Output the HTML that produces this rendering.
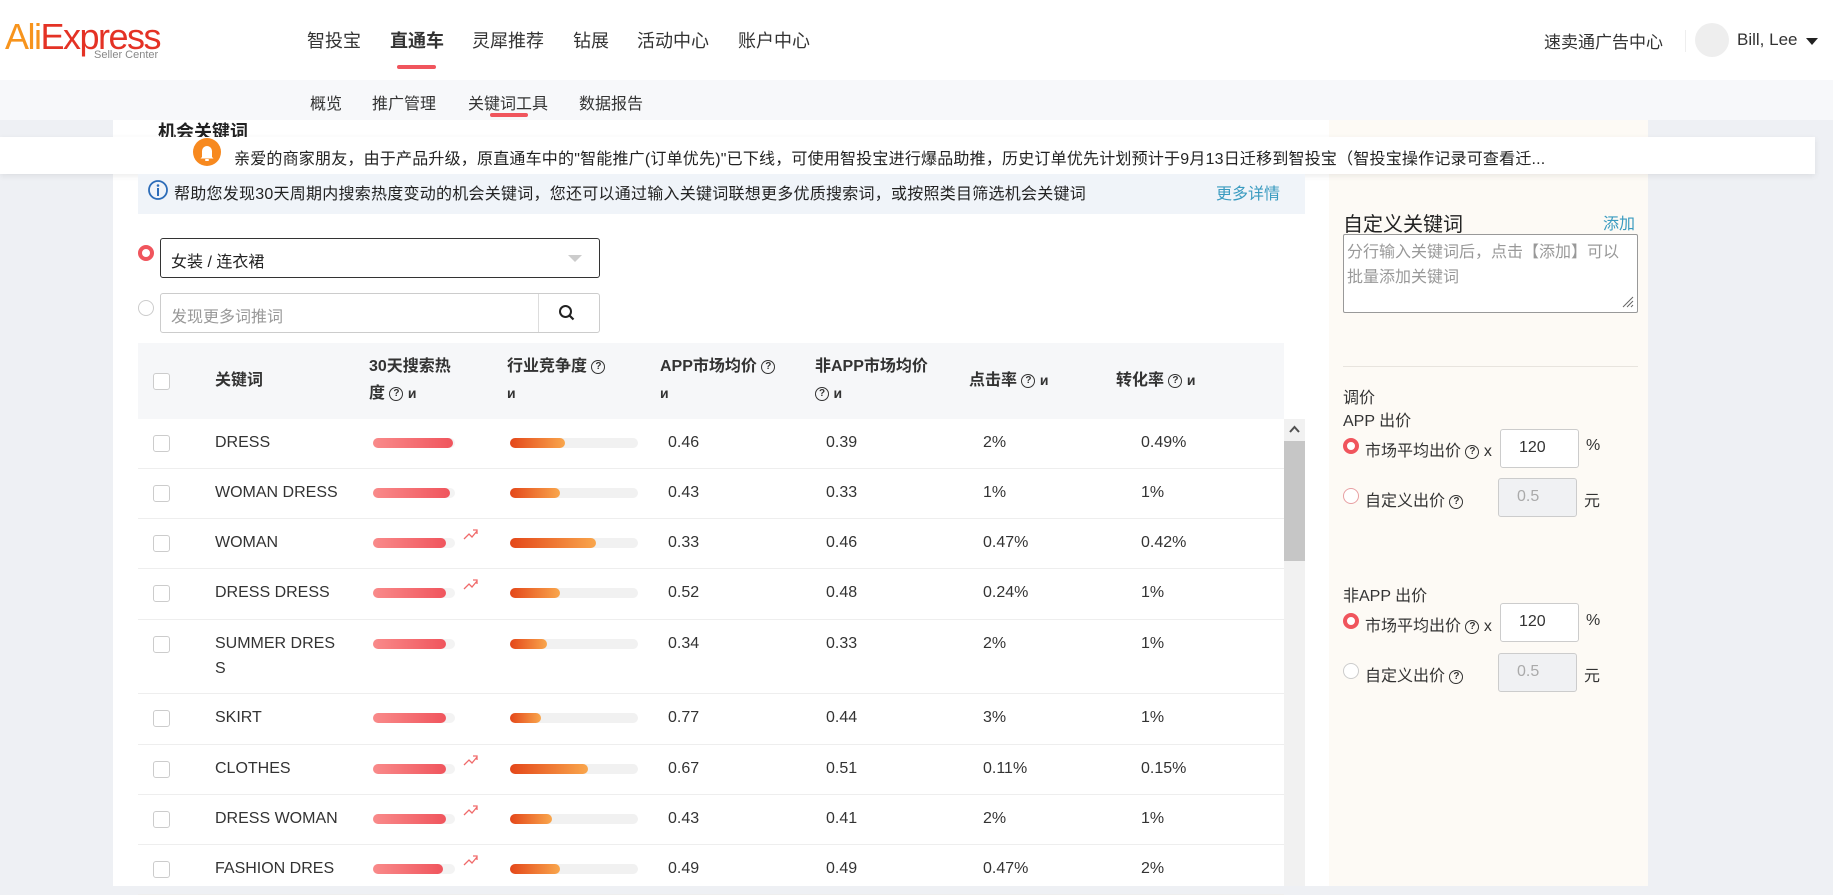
<!DOCTYPE html>
<html><head><meta charset="utf-8">
<style>
*{box-sizing:border-box;margin:0;padding:0}
body{width:1833px;height:886px;overflow:hidden;position:relative;background:#eef0f4;font-family:"Liberation Sans","Noto Sans CJK SC",sans-serif;color:#333}
.a{position:absolute;white-space:nowrap}
.hdr{left:0;top:0;width:1833px;height:80px;background:#fff}
.sub{left:0;top:80px;width:1833px;height:40px;background:#f7f8fa}
.nav{top:27px;font-size:18px;color:#333}
.sn{top:90px;font-size:16px;color:#333}
.main{left:113px;top:120px;width:1216px;height:766px;background:#fff}
.rp{left:1329px;top:120px;width:319px;height:766px;background:#fdfaf5}
.notice{left:0;top:137px;width:1815px;height:37px;background:#fff;box-shadow:0 2px 6px rgba(0,0,0,.08)}
.cb{width:17px;height:17px;border:1px solid #ccc;border-radius:3px;background:#fff}
.th{font-size:16px;font-weight:bold;color:#333;line-height:27px}
.row{left:138px;width:1146px;border-bottom:1px solid #eee}
.c{position:absolute;top:14px;font-size:16px;line-height:20px;color:#333;white-space:nowrap}
.hb{position:absolute;top:19px;left:235px;width:82px;height:10px;border-radius:5px;background:#f3f3f3}
.hb i{display:block;height:10px;border-radius:5px;background:linear-gradient(90deg,#f98a8a,#f0555d)}
.cbb{position:absolute;top:19px;left:372px;width:128px;height:10px;border-radius:5px;background:#f1f1f1}
.cbb i{display:block;height:10px;border-radius:5px;background:linear-gradient(90deg,#e4471a,#f9a64c)}
.tr{position:absolute;top:8px;left:325px}
.q{display:inline-block;width:14px;height:14px;border:1.5px solid #333;border-radius:50%;font-size:10px;line-height:11px;text-align:center;font-weight:bold;vertical-align:middle;color:#333}
.radon{width:16px;height:16px;border-radius:50%;border:4px solid #f0555d;background:#fff}
.radoff{width:16px;height:16px;border-radius:50%;border:1px solid #e8a0a3;background:#fff}
.inp{border:1px solid #ccc;border-radius:3px;background:#fff;font-size:16px;padding-left:18px;line-height:36px}
.rl{font-size:16px;color:#333}
</style></head><body>
<div class="a hdr"></div>
<div class="a sub"></div>
<div class="a main"></div>
<div class="a rp"></div>

<!-- logo -->
<div class="a" style="left:5px;top:19px;font-size:36px;letter-spacing:-1.5px;line-height:36px"><span style="color:#f7941d">Ali</span><span style="color:#e43225">Express</span></div>
<div class="a" style="left:94px;top:49px;font-size:11px;color:#888">Seller Center</div>

<div class="a nav" style="left:307px">智投宝</div>
<div class="a nav" style="left:390px;font-weight:bold">直通车</div>
<div class="a" style="left:397px;top:65px;width:39px;height:4px;border-radius:2px;background:#f0555d"></div>
<div class="a nav" style="left:472px">灵犀推荐</div>
<div class="a nav" style="left:573px">钻展</div>
<div class="a nav" style="left:637px">活动中心</div>
<div class="a nav" style="left:738px">账户中心</div>

<div class="a nav" style="left:1544px;top:28px;font-size:17px">速卖通广告中心</div>
<div class="a" style="left:1685px;top:30px;width:1px;height:22px;background:#eee"></div>
<div class="a" style="left:1695px;top:23px;width:34px;height:34px;border-radius:50%;background:#eee"></div>
<div class="a nav" style="left:1737px;top:30px;font-size:17px">Bill, Lee</div>
<div class="a" style="left:1806px;top:38px;width:0;height:0;border-left:6px solid transparent;border-right:6px solid transparent;border-top:7px solid #222"></div>

<div class="a sn" style="left:310px">概览</div>
<div class="a sn" style="left:372px">推广管理</div>
<div class="a sn" style="left:468px">关键词工具</div>
<div class="a" style="left:490px;top:113px;width:38px;height:4px;border-radius:2px;background:#f0555d"></div>
<div class="a sn" style="left:579px">数据报告</div>

<div class="a" style="left:158px;top:118px;font-size:18px;font-weight:bold;color:#222">机会关键词</div>

<div class="a notice"></div>
<div class="a" style="left:193px;top:138px;width:28px;height:28px;border-radius:50%;background:#f7891f">
<svg width="28" height="28" viewBox="0 0 28 28"><path d="M9 19V13a5 5 0 0 1 10 0v6l1.5 1.5h-13z" fill="#fff"/><rect x="12" y="21" width="4" height="2" rx="1" fill="#fff"/></svg></div>
<div class="a" style="left:234px;top:145px;font-size:16px;color:#222;letter-spacing:0.2px">亲爱的商家朋友，由于产品升级，原直通车中的"智能推广(订单优先)"已下线，可使用智投宝进行爆品助推，历史订单优先计划预计于9月13日迁移到智投宝（智投宝操作记录可查看迁...</div>

<div class="a" style="left:138px;top:174px;width:1167px;height:40px;background:#f0f4f9"></div>
<svg class="a" style="left:147px;top:179px" width="22" height="22" viewBox="0 0 22 22"><circle cx="11" cy="11" r="9" fill="none" stroke="#2c6cb8" stroke-width="1.8"/><circle cx="11" cy="6.5" r="1.3" fill="#2c6cb8"/><rect x="10" y="9" width="2" height="8" fill="#2c6cb8"/></svg>
<div class="a" style="left:174px;top:180px;font-size:16px;color:#222;letter-spacing:0.25px">帮助您发现30天周期内搜索热度变动的机会关键词，您还可以通过输入关键词联想更多优质搜索词，或按照类目筛选机会关键词</div>
<div class="a" style="left:1216px;top:180px;font-size:16px;color:#3a9bc0">更多详情</div>

<div class="a radon" style="left:138px;top:245px"></div>
<div class="a" style="left:160px;top:238px;width:440px;height:40px;border:1px solid #333;border-radius:3px"></div>
<div class="a" style="left:171px;top:248px;font-size:16px;color:#222">女装 / 连衣裙</div>
<div class="a" style="left:568px;top:255px;width:0;height:0;border-left:7px solid transparent;border-right:7px solid transparent;border-top:7px solid #ccc"></div>

<div class="a radoff" style="left:138px;top:300px;border-color:#ccc"></div>
<div class="a" style="left:160px;top:293px;width:440px;height:40px;border:1px solid #ccc;border-radius:3px"></div>
<div class="a" style="left:538px;top:294px;width:1px;height:38px;background:#ddd"></div>
<div class="a" style="left:171px;top:303px;font-size:16px;color:#999">发现更多词推词</div>
<svg class="a" style="left:558px;top:304px" width="18" height="18" viewBox="0 0 18 18"><circle cx="7.5" cy="7.5" r="5.5" fill="none" stroke="#222" stroke-width="2"/><path d="M11.5 11.5l4 4" stroke="#222" stroke-width="2.2"/></svg>

<!-- table header -->
<div class="a" style="left:138px;top:343px;width:1146px;height:76px;background:#f6f7f9"></div>
<div class="a cb" style="left:153px;top:373px"></div>
<div class="a th" style="left:215px;top:367px">关键词</div>
<div class="a th" style="left:369px;top:353px">30天搜索热<br>度 <span class="q">?</span> <b style="font-size:14px">ᴎ</b></div>
<div class="a th" style="left:507px;top:353px">行业竞争度 <span class="q">?</span><br><b style="font-size:14px">ᴎ</b></div>
<div class="a th" style="left:660px;top:353px">APP市场均价 <span class="q">?</span><br><b style="font-size:14px">ᴎ</b></div>
<div class="a th" style="left:815px;top:353px">非APP市场均价<br><span class="q">?</span> <b style="font-size:14px">ᴎ</b></div>
<div class="a th" style="left:969px;top:367px">点击率 <span class="q">?</span> <b style="font-size:14px">ᴎ</b></div>
<div class="a th" style="left:1116px;top:367px">转化率 <span class="q">?</span> <b style="font-size:14px">ᴎ</b></div>

<!-- scrollbar -->
<div class="a" style="left:1284px;top:419px;width:21px;height:467px;background:#f1f1f1"></div>
<div class="a" style="left:1284px;top:441px;width:21px;height:120px;background:#c6c6c6"></div>
<svg class="a" style="left:1288px;top:424px" width="13" height="10" viewBox="0 0 13 10"><path d="M2 8l4.5-5 4.5 5" fill="none" stroke="#505050" stroke-width="2"/></svg>

<!-- rows -->
<div class="a row" style="top:419px;height:50px"><div class="a cb" style="left:15px;top:16px"></div><div class="c" style="left:77px">DRESS</div><div class="hb"><i style="width:80px"></i></div><div class="cbb"><i style="width:55px"></i></div><div class="c" style="left:530px">0.46</div><div class="c" style="left:688px">0.39</div><div class="c" style="left:845px">2%</div><div class="c" style="left:1003px">0.49%</div></div>
<div class="a row" style="top:469px;height:50px"><div class="a cb" style="left:15px;top:16px"></div><div class="c" style="left:77px">WOMAN DRESS</div><div class="hb"><i style="width:77px"></i></div><div class="cbb"><i style="width:50px"></i></div><div class="c" style="left:530px">0.43</div><div class="c" style="left:688px">0.33</div><div class="c" style="left:845px">1%</div><div class="c" style="left:1003px">1%</div></div>
<div class="a row" style="top:519px;height:50px"><div class="a cb" style="left:15px;top:16px"></div><div class="c" style="left:77px">WOMAN</div><div class="hb"><i style="width:73px"></i></div><svg class="tr" width="16" height="14" viewBox="0 0 16 14"><path d="M1 12l5-5 3 3 5-6M10 3h4v4" fill="none" stroke="#f06a6a" stroke-width="1.3"/></svg><div class="cbb"><i style="width:86px"></i></div><div class="c" style="left:530px">0.33</div><div class="c" style="left:688px">0.46</div><div class="c" style="left:845px">0.47%</div><div class="c" style="left:1003px">0.42%</div></div>
<div class="a row" style="top:569px;height:51px"><div class="a cb" style="left:15px;top:16px"></div><div class="c" style="left:77px">DRESS DRESS</div><div class="hb"><i style="width:73px"></i></div><svg class="tr" width="16" height="14" viewBox="0 0 16 14"><path d="M1 12l5-5 3 3 5-6M10 3h4v4" fill="none" stroke="#f06a6a" stroke-width="1.3"/></svg><div class="cbb"><i style="width:50px"></i></div><div class="c" style="left:530px">0.52</div><div class="c" style="left:688px">0.48</div><div class="c" style="left:845px">0.24%</div><div class="c" style="left:1003px">1%</div></div>
<div class="a row" style="top:620px;height:74px"><div class="a cb" style="left:15px;top:16px"></div><div class="c" style="left:77px;line-height:25px;top:11px">SUMMER DRES<br>S</div><div class="hb"><i style="width:73px"></i></div><div class="cbb"><i style="width:37px"></i></div><div class="c" style="left:530px">0.34</div><div class="c" style="left:688px">0.33</div><div class="c" style="left:845px">2%</div><div class="c" style="left:1003px">1%</div></div>
<div class="a row" style="top:694px;height:51px"><div class="a cb" style="left:15px;top:16px"></div><div class="c" style="left:77px">SKIRT</div><div class="hb"><i style="width:73px"></i></div><div class="cbb"><i style="width:31px"></i></div><div class="c" style="left:530px">0.77</div><div class="c" style="left:688px">0.44</div><div class="c" style="left:845px">3%</div><div class="c" style="left:1003px">1%</div></div>
<div class="a row" style="top:745px;height:50px"><div class="a cb" style="left:15px;top:16px"></div><div class="c" style="left:77px">CLOTHES</div><div class="hb"><i style="width:73px"></i></div><svg class="tr" width="16" height="14" viewBox="0 0 16 14"><path d="M1 12l5-5 3 3 5-6M10 3h4v4" fill="none" stroke="#f06a6a" stroke-width="1.3"/></svg><div class="cbb"><i style="width:78px"></i></div><div class="c" style="left:530px">0.67</div><div class="c" style="left:688px">0.51</div><div class="c" style="left:845px">0.11%</div><div class="c" style="left:1003px">0.15%</div></div>
<div class="a row" style="top:795px;height:50px"><div class="a cb" style="left:15px;top:16px"></div><div class="c" style="left:77px">DRESS WOMAN</div><div class="hb"><i style="width:73px"></i></div><svg class="tr" width="16" height="14" viewBox="0 0 16 14"><path d="M1 12l5-5 3 3 5-6M10 3h4v4" fill="none" stroke="#f06a6a" stroke-width="1.3"/></svg><div class="cbb"><i style="width:42px"></i></div><div class="c" style="left:530px">0.43</div><div class="c" style="left:688px">0.41</div><div class="c" style="left:845px">2%</div><div class="c" style="left:1003px">1%</div></div>
<div class="a row" style="top:845px;height:50px"><div class="a cb" style="left:15px;top:16px"></div><div class="c" style="left:77px">FASHION DRES</div><div class="hb"><i style="width:70px"></i></div><svg class="tr" width="16" height="14" viewBox="0 0 16 14"><path d="M1 12l5-5 3 3 5-6M10 3h4v4" fill="none" stroke="#f06a6a" stroke-width="1.3"/></svg><div class="cbb"><i style="width:50px"></i></div><div class="c" style="left:530px">0.49</div><div class="c" style="left:688px">0.49</div><div class="c" style="left:845px">0.47%</div><div class="c" style="left:1003px">2%</div></div>

<!-- right panel -->
<div class="a" style="left:1343px;top:208px;font-size:20px;color:#222">自定义关键词</div>
<div class="a" style="left:1603px;top:210px;font-size:16px;color:#3a9bc0">添加</div>
<div class="a" style="left:1343px;top:234px;width:295px;height:79px;border:1px solid #999;border-radius:2px;background:#fff"></div>
<div class="a" style="left:1347px;top:240px;font-size:16px;color:#999;line-height:25px;white-space:normal;width:276px">分行输入关键词后，点击【添加】可以批量添加关键词</div>
<svg class="a" style="left:1620px;top:294px" width="14" height="14" viewBox="0 0 14 14"><path d="M13 3L3 13M13 7L7 13M13 11L11 13" stroke="#666" stroke-width="1"/></svg>
<div class="a" style="left:1343px;top:366px;width:295px;height:1px;background:#e8e4de"></div>

<div class="a rl" style="left:1343px;top:384px">调价</div>
<div class="a rl" style="left:1343px;top:407px">APP 出价</div>
<div class="a radon" style="left:1343px;top:438px"></div>
<div class="a rl" style="left:1365px;top:437px">市场平均出价 <span class="q">?</span> x</div>
<div class="a inp" style="left:1500px;top:429px;width:79px;height:39px">120</div>
<div class="a rl" style="left:1586px;top:437px">%</div>
<div class="a radoff" style="left:1343px;top:488px"></div>
<div class="a rl" style="left:1365px;top:487px">自定义出价 <span class="q">?</span></div>
<div class="a inp" style="left:1498px;top:478px;width:79px;height:39px;background:#f0f1f3;color:#aaa">0.5</div>
<div class="a rl" style="left:1584px;top:487px">元</div>

<div class="a rl" style="left:1343px;top:582px">非APP 出价</div>
<div class="a radon" style="left:1343px;top:613px"></div>
<div class="a rl" style="left:1365px;top:612px">市场平均出价 <span class="q">?</span> x</div>
<div class="a inp" style="left:1500px;top:603px;width:79px;height:39px">120</div>
<div class="a rl" style="left:1586px;top:612px">%</div>
<div class="a radoff" style="left:1343px;top:663px;border-color:#ccc"></div>
<div class="a rl" style="left:1365px;top:662px">自定义出价 <span class="q">?</span></div>
<div class="a inp" style="left:1498px;top:653px;width:79px;height:39px;background:#f0f1f3;color:#aaa">0.5</div>
<div class="a rl" style="left:1584px;top:662px">元</div>
</body></html>
